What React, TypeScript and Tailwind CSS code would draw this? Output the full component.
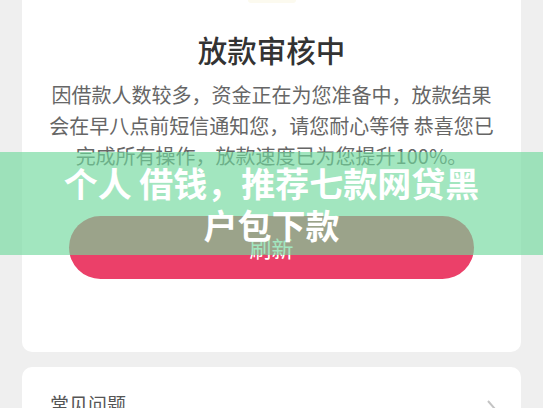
import React from "react";

export default function App() {
  const cjk = { fontFamily: '"Noto Sans CJK SC", "Noto Sans", sans-serif' };
  return (
    <div className="relative w-[543px] h-[408px] overflow-hidden bg-[#efefef]" style={cjk}>
      <div className="px-[22px] flex flex-col gap-[15px]">
        <div className="bg-white rounded-b-[10px] flex flex-col items-center pb-[73px]">
          <div className="w-[48px] h-[3px] rounded-b-full bg-[#fcfaef]" />
          <div className="mt-[28px] text-[29.5px] leading-[36px] font-medium text-[#333333]">放款审核中</div>
          <p className="mt-[13px] w-[450px] text-center text-[20px] leading-[30.5px] text-[#666666]">
            因借款人数较多，资金正在为您准备中，放款结果会在早八点前短信通知您，请您耐心等待 恭喜您已完成所有操作，放款速度已为您提升100%。
          </p>
          <button className="mt-[44px] w-[405px] h-[63px] rounded-full bg-[#eb4069] text-white text-[22px] flex items-center justify-center">
            刷新
          </button>
        </div>
        <div className="bg-white rounded-[10px] h-[80px] pl-[28px] pr-[23px] pt-[24px] flex justify-between items-start">
          <span className="text-[19px] leading-[26px] text-[#555555]">常见问题</span>
          <svg width="12" height="20" viewBox="0 0 12 20" className="mt-[8px]">
            <path d="M2 2 L9 10 L2 18" fill="none" stroke="#c4c4c4" strokeWidth="2" />
          </svg>
        </div>
      </div>
      <div className="absolute left-0 right-0 top-[152px] h-[103px] bg-[rgba(112,216,156,0.65)] flex items-center justify-center">
        <div className="w-[436px] text-center text-white font-bold text-[34px] leading-[42px]">
          个人 借钱，推荐七款网贷黑户包下款
        </div>
      </div>
    </div>
  );
}
